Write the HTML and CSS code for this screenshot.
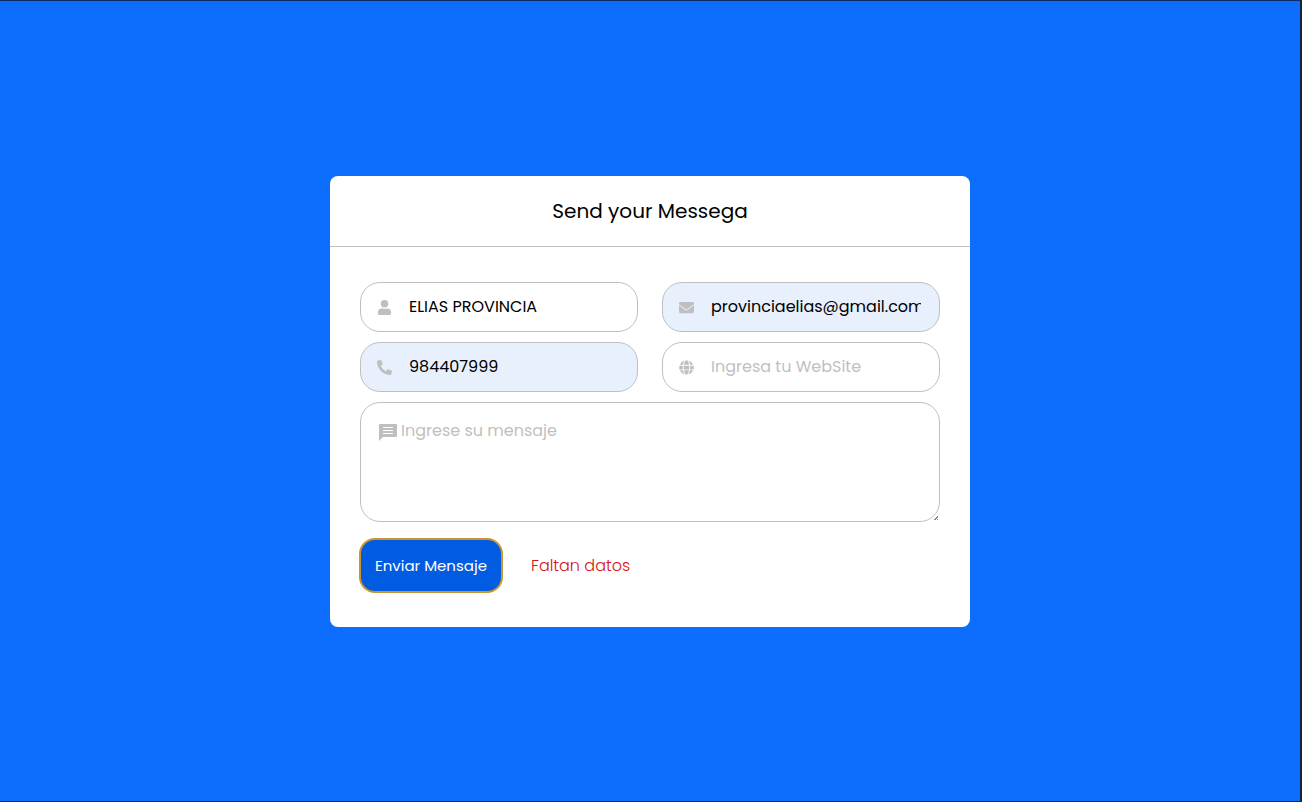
FILE: index.html
```html
<!DOCTYPE html>
<html lang="es">
<head>
<meta charset="utf-8">
<meta name="viewport" content="width=device-width, initial-scale=1">
<title>Send your Messega</title>
<link rel="stylesheet" href="styles.css">
</head>
<body>
<main class="card">
  <h1 class="card-title">Send your Messega</h1>
  <form class="form" novalidate>
    <div class="fields">
      <label class="field">
        <svg class="icon" viewBox="0 0 448 512" role="img" aria-label="Nombre"><path d="M224 256a128 128 0 1 0 0-256 128 128 0 0 0 0 256zm90 32h-17a174 174 0 0 1-146 0h-17A134 134 0 0 0 0 422v42c0 27 21 48 48 48h352c27 0 48-21 48-48v-42a134 134 0 0 0-134-134z"/></svg>
        <input class="input" type="text" value="ELIAS PROVINCIA">
      </label>
      <label class="field filled">
        <svg class="icon" viewBox="0 0 512 512" role="img" aria-label="Correo"><path d="M502 191c4-3 10 0 10 5v204c0 27-21 48-48 48H48c-27 0-48-21-48-48V196c0-5 6-8 10-5 22 17 52 39 154 114 21 15 57 47 92 47s71-32 92-47c102-75 132-97 154-114zM256 320c23 0 57-29 73-42 133-96 143-104 173-128 6-4 10-11 10-19v-19c0-27-21-48-48-48H48c-27 0-48 21-48 48v19c0 8 4 15 10 19 30 24 40 32 173 128 16 13 50 42 73 42z"/></svg>
        <input class="input" type="email" value="provinciaelias@gmail.com">
      </label>
      <label class="field filled">
        <svg class="icon" viewBox="0 0 512 512" role="img" aria-label="Teléfono"><path d="M493 361l-112-48a24 24 0 0 0-28 7l-50 61A371 371 0 0 1 126 204l61-50a24 24 0 0 0 7-28L146 14a24 24 0 0 0-28-13L14 25A24 24 0 0 0 0 48c0 257 208 464 464 464a24 24 0 0 0 23-19l24-104a24 24 0 0 0-18-28z"/></svg>
        <input class="input" type="tel" value="984407999">
      </label>
      <label class="field">
        <svg class="icon" viewBox="0 0 496 512" role="img" aria-label="Sitio web"><path d="M336 160C322 71 288 8 248 8s-74 63-88 152h176zM152 256c0 22 1 44 3 64h186a640 640 0 0 0 0-128H155a640 640 0 0 0-3 64zm325-96A248 248 0 0 0 315 18c25 34 43 86 52 142h110zM181 18A248 248 0 0 0 19 160h110c9-56 27-108 52-142zm306 174H373a650 650 0 0 1 0 128h114a248 248 0 0 0 0-128zM120 256c0-22 1-43 3-64H9a248 248 0 0 0 0 128h114c-2-21-3-42-3-64zm40 96c14 89 48 152 88 152s74-63 88-152H160zm155 142a248 248 0 0 0 162-142H367c-9 56-27 108-52 142zM19 352a248 248 0 0 0 162 142c-25-34-43-86-52-142H19z"/></svg>
        <input class="input" type="url" placeholder="Ingresa tu WebSite">
      </label>
    </div>
    <div class="message">
      <svg class="message-icon" viewBox="0 0 18 18" aria-hidden="true"><path d="M1 1h16q1 0 1 1v11q0 1-1 1H4l-4 4V2q0-1 1-1zM4 4v1h10V4zm0 3v1h10V7zm0 3v1h10v-1z" fill-rule="evenodd"/></svg>
      <textarea class="textarea" aria-label="Mensaje" placeholder="Ingrese su mensaje"></textarea>
    </div>
    <div class="actions">
      <button class="submit" type="button">Enviar Mensaje</button>
      <span class="error" role="alert">Faltan datos</span>
    </div>
  </form>
</main>
</body>
</html>
```
FILE: styles.css
```css
* {
  box-sizing: border-box;
}

body {
  margin: 0;
  padding-top: 1px;
  min-height: 100vh;
  display: flex;
  align-items: center;
  justify-content: center;
  background: #0d6efd;
  border: 1px solid #0b2c62;
  border-right: 2px solid #14233c;
  border-left: 0;
  font-family: Poppins, Inter, sans-serif;
  font-size: 16px;
  font-weight: 300;
}

.card {
  width: 100%;
  max-width: 640px;
  background: #fff;
  border-radius: 8px;
}

.card-title {
  margin: 0;
  padding: 20px 30px;
  border-bottom: 1px solid #bfbfbf;
  text-align: center;
  font-size: 20px;
  line-height: 30px;
  font-weight: 400;
  color: #000;
}

.form {
  padding: 35px 30px 34px;
}

.fields {
  display: grid;
  grid-template-columns: repeat(auto-fit, minmax(240px, 1fr));
  gap: 10px 24px;
}

.field {
  display: flex;
  align-items: center;
  height: 50px;
  padding: 0 18px 0 16px;
  gap: 17px;
  border: 1px solid #bfbfbf;
  border-radius: 20px;
}

.filled {
  background: #e8f0fe;
}

.icon {
  flex: none;
  width: 15px;
  height: 15px;
  fill: #bfbfbf;
}

.input {
  flex: 1;
  min-width: 0;
  height: 48px;
  padding: 0 0 2px;
  border: 0;
  outline: 0;
  background: transparent;
  font: inherit;
  font-weight: 400;
  color: #000;
}

.input::placeholder,
.textarea::placeholder {
  color: #bfbfbf;
  opacity: 1;
}

.message {
  position: relative;
  margin-top: 10px;
}

.message-icon {
  position: absolute;
  left: 19px;
  top: 21px;
  width: 18px;
  height: 18px;
  fill: #bfbfbf;
}

.textarea {
  display: block;
  width: 100%;
  height: 120px;
  padding: 16px 18px 16px 40px;
  border: 1px solid #bfbfbf;
  border-radius: 20px;
  outline: 0;
  background: transparent;
  font: inherit;
  font-weight: 400;
  line-height: 24px;
  color: #000;
  resize: vertical;
}

.textarea::-webkit-resizer {
  background: linear-gradient(135deg, transparent 50%, #888 50%, #888 65%, transparent 65%, transparent 80%, #888 80%) right 1px bottom 1px / 4px 4px no-repeat;
}

.actions {
  display: flex;
  align-items: center;
  gap: 28px;
  margin: 16px 0 0 -1px;
}

.submit {
  width: 144px;
  height: 55px;
  padding: 0;
  border: 2px solid #c9952f;
  border-radius: 16px;
  background: #025ce2;
  color: #fff;
  font: inherit;
  font-size: 15px;
  font-weight: 400;
}

.error {
  color: #d31212;
}
```
